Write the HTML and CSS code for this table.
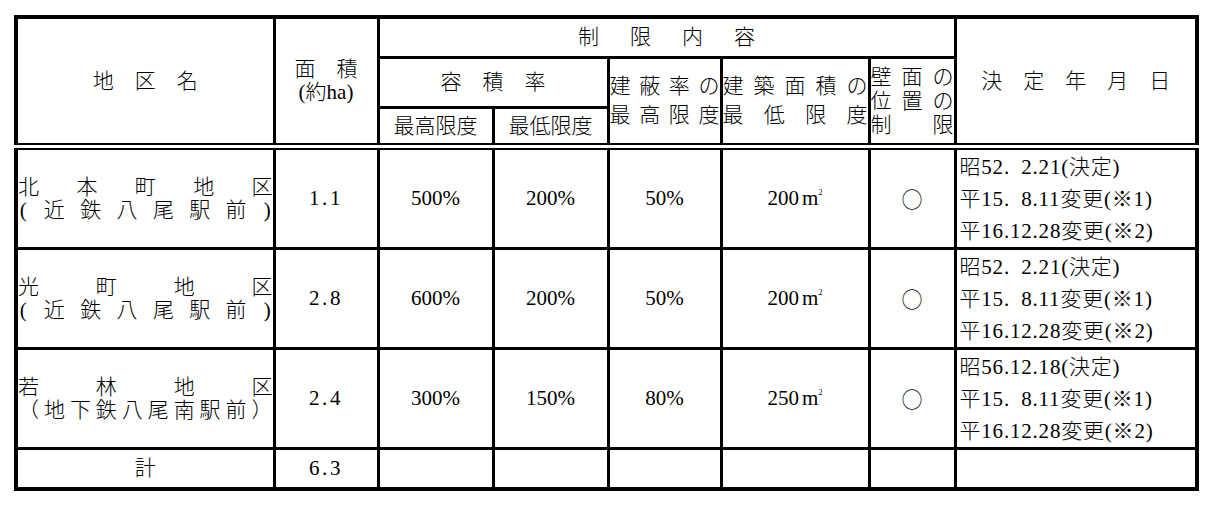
FILE: index.html
```html
<!DOCTYPE html>
<html lang="ja">
<head>
<meta charset="utf-8">
<title>地区計画一覧</title>
<link rel="stylesheet" href="styles.css">
</head>
<body>
<table class="plan">
  <colgroup>
    <col class="c-name"><col class="c-area"><col class="c-max"><col class="c-min"><col class="c-cover"><col class="c-floor"><col class="c-wall"><col class="c-date">
  </colgroup>
  <thead>
    <tr>
      <th rowspan="3" class="h-name">地　区　名</th>
      <th rowspan="3" class="h-area"><div>面　積</div><div>(約ha)</div></th>
      <th colspan="5" class="r1"><span class="wide">制限内容</span></th>
      <th rowspan="3" class="h-date">決　定　年　月　日</th>
    </tr>
    <tr>
      <th colspan="2" class="r2">容　積　率</th>
      <th rowspan="2" class="h-cover">
        <div class="dist"><span>建</span><span>蔽</span><span>率</span><span>の</span></div>
        <div class="dist"><span>最</span><span>高</span><span>限</span><span>度</span></div>
      </th>
      <th rowspan="2" class="h-floor">
        <div class="dist"><span>建</span><span>築</span><span>面</span><span>積</span><span>の</span></div>
        <div class="dist"><span>最</span><span>低</span><span>限</span><span>度</span></div>
      </th>
      <th rowspan="2" class="h-wall">
        <div class="dist"><span>壁</span><span>面</span><span>の</span></div>
        <div class="dist"><span>位</span><span>置</span><span>の</span></div>
        <div class="dist"><span>制</span><span>限</span></div>
      </th>
    </tr>
    <tr>
      <th class="r3">最高限度</th>
      <th class="r3">最低限度</th>
    </tr>
  </thead>
  <tbody>
    <tr class="row">
      <td class="name">
        <div class="dist"><span>北</span><span>本</span><span>町</span><span>地</span><span>区</span></div>
        <div class="dist"><span class="hw">(</span><span>近</span><span>鉄</span><span>八</span><span>尾</span><span>駅</span><span>前</span><span class="hw">)</span></div>
      </td>
      <td class="area">1.1</td>
      <td class="num">500%</td>
      <td class="num">200%</td>
      <td class="num">50%</td>
      <td class="num">200<span class="sqm">m<sup>2</sup></span></td>
      <td class="mark">○</td>
      <td class="date">
        <div>昭52.&ensp;2.21(決定)</div>
        <div>平15.&ensp;8.11変更(※1)</div>
        <div>平16.12.28変更(※2)</div>
      </td>
    </tr>
    <tr class="row">
      <td class="name">
        <div class="dist"><span>光</span><span>町</span><span>地</span><span>区</span></div>
        <div class="dist"><span class="hw">(</span><span>近</span><span>鉄</span><span>八</span><span>尾</span><span>駅</span><span>前</span><span class="hw">)</span></div>
      </td>
      <td class="area">2.8</td>
      <td class="num">600%</td>
      <td class="num">200%</td>
      <td class="num">50%</td>
      <td class="num">200<span class="sqm">m<sup>2</sup></span></td>
      <td class="mark">○</td>
      <td class="date">
        <div>昭52.&ensp;2.21(決定)</div>
        <div>平15.&ensp;8.11変更(※1)</div>
        <div>平16.12.28変更(※2)</div>
      </td>
    </tr>
    <tr class="row">
      <td class="name">
        <div class="dist"><span>若</span><span>林</span><span>地</span><span>区</span></div>
        <div class="dist"><span>（</span><span>地</span><span>下</span><span>鉄</span><span>八</span><span>尾</span><span>南</span><span>駅</span><span>前</span><span>）</span></div>
      </td>
      <td class="area">2.4</td>
      <td class="num">300%</td>
      <td class="num">150%</td>
      <td class="num">80%</td>
      <td class="num">250<span class="sqm">m<sup>2</sup></span></td>
      <td class="mark">○</td>
      <td class="date">
        <div>昭56.12.18(決定)</div>
        <div>平15.&ensp;8.11変更(※1)</div>
        <div>平16.12.28変更(※2)</div>
      </td>
    </tr>
    <tr class="total">
      <td class="total-label">計</td>
      <td class="area">6.3</td>
      <td></td>
      <td></td>
      <td></td>
      <td></td>
      <td></td>
      <td></td>
    </tr>
  </tbody>
</table>
</body>
</html>
```

FILE: styles.css
```css
html, body {
  margin: 0;
  padding: 0;
  background: #fff;
}

body {
  font-family: "Liberation Serif", "Noto Sans CJK JP", serif;
  font-size: 21px;
  color: #000;
}

.plan {
  border-collapse: collapse;
  table-layout: fixed;
  width: 1185px;
  margin: 15px 0 0 14px;
  border: 4px solid #000;
}

.c-name { width: 258px; }
.c-area { width: 104px; }
.c-max { width: 115px; }
.c-min { width: 115px; }
.c-cover { width: 113px; }
.c-floor { width: 148px; }
.c-wall { width: 86px; }
.c-date { width: 242px; }

.plan th,
.plan td {
  border: 3px solid #000;
  padding: 0;
  font-weight: 300;
  text-align: center;
  vertical-align: middle;
  line-height: 23px;
  white-space: nowrap;
}

.r1 { height: 37px; }
.r2 { height: 47px; }
.r3 { height: 34px; }

.wide {
  letter-spacing: 31px;
  margin-right: -31px;
}

.dist {
  display: flex;
  justify-content: space-between;
}

.hw {
  display: inline-block;
  width: 10.5px;
  text-align: center;
}

.h-cover {
  padding: 0 2px;
}
.h-cover .dist,
.h-floor .dist {
  line-height: 29px;
}

.h-floor {
  padding: 0 4px;
}

.h-wall {
  padding: 0 5px 0 1px;
}
.h-wall .dist {
  line-height: 24px;
}

tbody tr:first-child td {
  border-top: 7px double #000;
}

.row td {
  height: 97px;
}

.name {
  padding: 0 5px 0 4px;
}

.area {
  letter-spacing: 2.6px;
  padding-left: 2.6px;
}

.sqm {
  margin-left: 3px;
}
.sqm sup {
  font-size: 8px;
  line-height: 0;
  vertical-align: 10px;
}

.mark {
  font-family: "Noto Sans CJK JP", sans-serif;
}

.plan td.date {
  text-align: left;
  padding-left: 3px;
  letter-spacing: 0.8px;
}
.date div {
  line-height: 32px;
}

.total td {
  height: 37px;
}
```
